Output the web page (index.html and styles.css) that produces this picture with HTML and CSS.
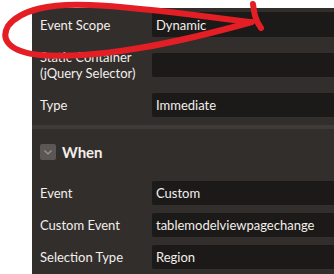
FILE: index.html
```html
<!DOCTYPE html>
<html lang="en">
<head>
    <meta charset="UTF-8">
    <meta name="viewport" content="width=device-width, initial-scale=1.0">
    <title>Dynamic Action</title>
    <link rel="stylesheet" href="styles.css">
</head>
<body>
    <div class="props-panel">
        <div class="prop-section">
            <div class="prop-row">
                <label class="prop-label">Event Scope</label>
                <div class="prop-field">Dynamic</div>
            </div>
            <div class="prop-row">
                <label class="prop-label">Static Container (jQuery Selector)</label>
                <div class="prop-field"></div>
            </div>
            <div class="prop-row">
                <label class="prop-label">Type</label>
                <div class="prop-field">Immediate</div>
            </div>
        </div>
        <div class="prop-section when-section">
            <div class="section-head">
                <span class="toggle-btn">
                    <svg width="16" height="16" viewBox="0 0 16 16">
                        <path d="M4.5 6.5 L8 10 L11.5 6.5" fill="none" stroke="#9b9693" stroke-width="1.2"/>
                    </svg>
                </span>
                <h3>When</h3>
            </div>
            <div class="prop-row">
                <label class="prop-label">Event</label>
                <div class="prop-field">Custom</div>
            </div>
            <div class="prop-row">
                <label class="prop-label">Custom Event</label>
                <div class="prop-field">tablemodelviewpagechange</div>
            </div>
            <div class="prop-row">
                <label class="prop-label">Selection Type</label>
                <div class="prop-field">Region</div>
            </div>
        </div>
    </div>

    <!-- red marker scribble drawn over the screenshot -->
    <svg class="scribble" width="334" height="80" viewBox="0 0 334 80">
        <path d="M250 22 C200 16, 140 7, 90 5 C50 3, 20 10, 8 26 C0 40, 10 52, 40 55 C100 60, 180 42, 252 22"
              fill="none" stroke="#e41e25" stroke-width="6" stroke-linecap="round"/>
        <path d="M253 4 C254 12, 255 20, 261 28"
              fill="none" stroke="#e41e25" stroke-width="6" stroke-linecap="round"/>
    </svg>
</body>
</html>
```

FILE: styles.css
```css
body {
    margin: 0;
    background-color: #fff;
    font-family: Lato, "Noto Sans", sans-serif;
    font-size: 13px;
    color: #f3efeb;
    overflow: hidden;
    height: 274px;
}
.props-panel {
    margin: 8px 0 0 32px;
    background-color: #322e2b;
    min-height: 266px;
}
.prop-section {
    padding: 4px 0 8px 0;
}
.when-section {
    border-top: 4px solid #3f3b38;
    padding-top: 15px;
}
.prop-row {
    display: flex;
    align-items: center;
    height: 24px;
    margin-bottom: 16px;
}
.prop-row:first-child {
    height: 25px;
}
.prop-row:last-child {
    margin-bottom: 0;
}
.when-section .prop-row {
    height: 24px;
    margin-bottom: 8px;
}
.prop-label {
    flex: 0 0 120px;
    box-sizing: border-box;
    padding-left: 8px;
    line-height: 16px;
}
.prop-field {
    flex: 1;
    height: 100%;
    background-color: #1c1a18;
    border-radius: 2px 0 0 2px;
    padding-left: 4px;
    display: flex;
    align-items: center;
    white-space: nowrap;
}
.section-head {
    display: flex;
    align-items: center;
    height: 16px;
    padding-left: 8px;
    margin-bottom: 21px;
}
.toggle-btn {
    width: 16px;
    height: 16px;
    background-color: #5c5754;
    border-radius: 2px;
    display: flex;
}
.section-head h3 {
    margin: 0 0 0 6px;
    font-size: 15px;
    font-weight: bold;
}
.scribble {
    position: absolute;
    left: 0;
    top: 0;
}
```
